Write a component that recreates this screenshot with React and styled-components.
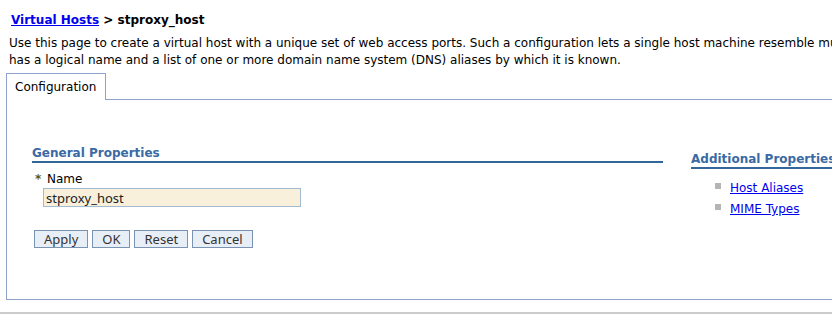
import React from 'react';
import styled, { createGlobalStyle } from 'styled-components';

const GlobalStyle = createGlobalStyle`
  html, body {
    margin: 0;
    padding: 0;
    overflow: hidden;
    background: #fff;
  }
  body {
    font-family: "DejaVu Sans", Verdana, sans-serif;
    font-size: 12px;
    color: #000;
  }
`;

const Page = styled.div`
  width: 1100px;
`;

const Breadcrumb = styled.div`
  margin: 12px 0 0 11px;
  line-height: 16px;
  font-weight: bold;

  a {
    color: #0000ee;
    text-decoration: underline;
  }
`;

const Description = styled.p`
  margin: 7px 0 0 9px;
  line-height: 17px;
  white-space: nowrap;
`;

const TabBar = styled.div`
  display: flex;
  margin: 4px 0 0 6px;
`;

const Tab = styled.div`
  height: 26px;
  line-height: 27px;
  padding: 0 9px 0 8px;
  border: 1px solid #8fa2cd;
  border-bottom: none;
  background: #fff;
`;

const TabFiller = styled.div`
  flex: 1;
  border-bottom: 1px solid #8fa2cd;
`;

const Panel = styled.div`
  margin-left: 6px;
  border-left: 1px solid #8fa2cd;
  border-bottom: 1px solid #8fa2cd;
  padding: 45px 0 51px 25px;
  display: flex;
  gap: 28px;
`;

const Column = styled.div`
  width: ${(p) => p.$width}px;
  margin-top: ${(p) => p.$offset || 0}px;
`;

const SectionTitle = styled.h2`
  margin: 0;
  font-size: 12px;
  line-height: 16px;
  font-weight: bold;
  color: #3a6aa3;
  border-bottom: 2px solid #336699;
  white-space: nowrap;
`;

const FieldLabel = styled.div`
  margin: 8px 0 0 3px;
  line-height: 16px;
  display: flex;
  align-items: center;
`;

const Required = styled.span`
  color: #5c5a10;
  font-size: 12px;
  font-weight: bold;
  width: 12px;
`;

const TextInput = styled.input`
  display: block;
  box-sizing: border-box;
  margin: 1px 0 0 11px;
  width: 258px;
  height: 19px;
  padding: 0 2px;
  border: 1px solid #a3bad3;
  background: #f8f0da;
  font-family: "Noto Sans", sans-serif;
  font-size: 13px;
  color: #222;
  outline: none;
`;

const ButtonRow = styled.div`
  display: flex;
  gap: 4px;
  margin: 23px 0 0 2px;
`;

const Button = styled.button`
  box-sizing: border-box;
  height: 18px;
  padding: 0 9px;
  border: 1px solid #7a93b3;
  background: #e8eef6;
  font-family: "Noto Sans", sans-serif;
  font-size: 13px;
  line-height: 15px;
  color: #333;
  border-radius: 0;
`;

const LinkList = styled.ul`
  list-style: none;
  margin: 11px 0 0 24px;
  padding: 0;
  display: flex;
  flex-direction: column;
  gap: 5px;
`;

const LinkItem = styled.li`
  display: flex;
  align-items: center;
  line-height: 16px;

  &::before {
    content: '';
    width: 6px;
    height: 6px;
    background: #b5b5b5;
    margin: -4px 9px 0 0;
  }

  a {
    color: #0000ee;
    text-decoration: underline;
  }
`;

const Divider = styled.hr`
  margin: 12px 0 0;
  border: none;
  border-top: 2px solid #cbcbcb;
`;

export default function App() {
  return (
    <Page>
      <GlobalStyle />
      <Breadcrumb>
        <a href="#">Virtual Hosts</a> &gt; stproxy_host
      </Breadcrumb>
      <Description>
        Use this page to create a virtual host with a unique set of web access ports. Such a configuration lets a single host machine resemble multiple host machines. Each virtual host
        <br />
        has a logical name and a list of one or more domain name system (DNS) aliases by which it is known.
      </Description>
      <TabBar>
        <Tab>Configuration</Tab>
        <TabFiller />
      </TabBar>
      <Panel>
        <Column $width={631}>
          <SectionTitle>General Properties</SectionTitle>
          <FieldLabel>
            <Required>*</Required>Name
          </FieldLabel>
          <TextInput defaultValue="stproxy_host" />
          <ButtonRow>
            <Button>Apply</Button>
            <Button>OK</Button>
            <Button>Reset</Button>
            <Button>Cancel</Button>
          </ButtonRow>
        </Column>
        <Column $width={300} $offset={6}>
          <SectionTitle>Additional Properties</SectionTitle>
          <LinkList>
            <LinkItem><a href="#">Host Aliases</a></LinkItem>
            <LinkItem><a href="#">MIME Types</a></LinkItem>
          </LinkList>
        </Column>
      </Panel>
      <Divider />
    </Page>
  );
}
